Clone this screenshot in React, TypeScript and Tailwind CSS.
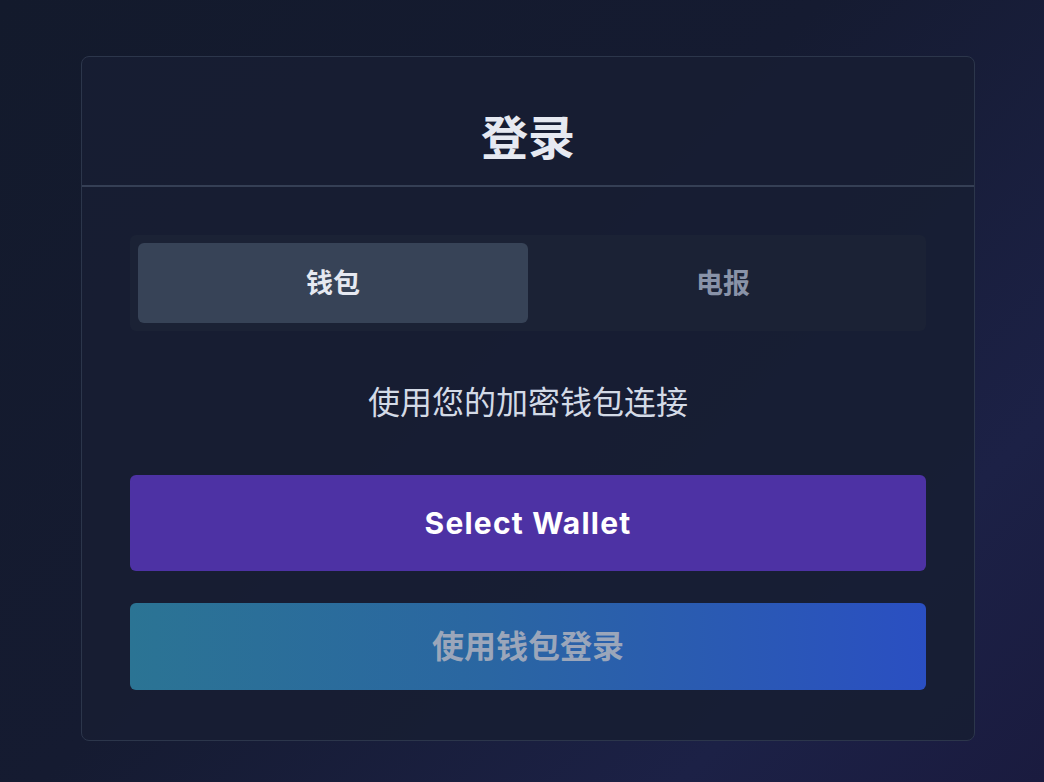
import React, { useState } from "react";

const cjk = { fontFamily: '"Inter", "Noto Sans CJK SC", sans-serif' };

export default function App() {
  const [tab, setTab] = useState<"wallet" | "telegram">("wallet");

  return (
    <div
      className="min-h-[782px] w-full bg-[linear-gradient(135deg,#131a2c_0%,#151b31_45%,#1c2146_80%,#1a1b3f_100%)] pl-[81px] pr-[69px] pt-[56px] pb-[40px]"
      style={cjk}
    >
      <div className="w-[894px] rounded-[8px] border border-[#2c364b] bg-[#171e33]/90">
        {/* header */}
        <div className="border-b-2 border-[#353f55] pt-[53px] pb-[19px] text-center">
          <h1 className="text-[47px] font-bold leading-[56px] text-[#e6e9f1]">登录</h1>
        </div>

        {/* body */}
        <div className="px-[48px] pt-[48px] pb-[50px]">
          <div className="grid grid-cols-2 rounded-[6px] bg-[#1b2235] p-[8px]">
            <button
              onClick={() => setTab("wallet")}
              className={`h-[80px] rounded-[6px] pt-[3px] text-[27px] font-bold ${
                tab === "wallet" ? "bg-[#374357] text-[#e6e9f1]" : "text-[#8993a8]"
              }`}
            >
              钱包
            </button>
            <button
              onClick={() => setTab("telegram")}
              className={`h-[80px] rounded-[6px] pt-[3px] text-[27px] font-bold ${
                tab === "telegram" ? "bg-[#374357] text-[#e6e9f1]" : "text-[#8993a8]"
              }`}
            >
              电报
            </button>
          </div>

          <p className="mt-[52px] text-center text-[32px] leading-[40px] text-[#d3dae6]">
            使用您的加密钱包连接
          </p>

          <button className="mt-[52px] flex h-[96px] w-full items-center justify-center rounded-[6px] bg-[#4d32a4] text-[30px] font-bold tracking-[1.2px] text-white">
            Select Wallet
          </button>

          <button
            disabled
            className="mt-[32px] flex h-[87px] w-full items-center justify-center rounded-[6px] bg-[linear-gradient(90deg,#2b7494_0%,#2a66a2_45%,#2a4fc2_100%)] text-[32px] font-bold text-[#9ba6ba]"
          >
            使用钱包登录
          </button>
        </div>
      </div>
    </div>
  );
}
